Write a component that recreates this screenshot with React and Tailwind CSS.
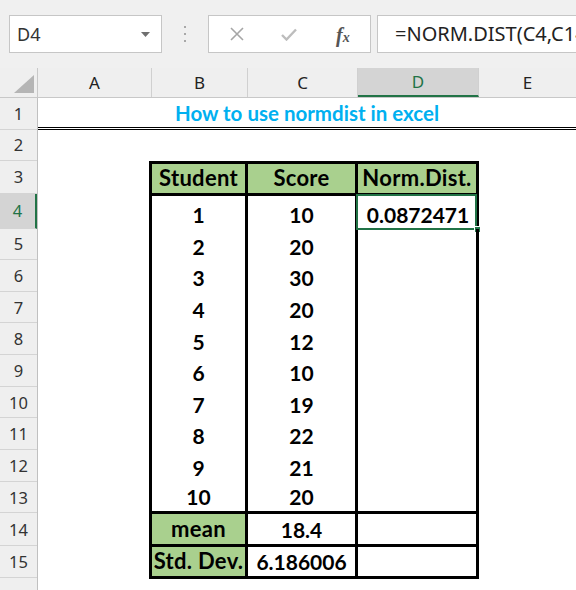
const COLS = [
  { l: "A", cls: "w-[114px]" },
  { l: "B", cls: "w-[96px]" },
  { l: "C", cls: "w-[110px]" },
  { l: "D", cls: "w-[121px] bg-[#d4d4d4] text-[#217346] border-b-2 border-b-[#217346]" },
];

const ROW_HEADS = [
  { n: 1, cls: "h-[31.5px]" },
  { n: 2, cls: "h-[31.5px]" },
  { n: 3, cls: "h-[32.5px]" },
  { n: 4, cls: "h-[35px] bg-[#d4d4d4] text-[#217346] border-r-2 border-r-[#217346]" },
  { n: 5, cls: "h-[31.65px]" },
  { n: 6, cls: "h-[31.65px]" },
  { n: 7, cls: "h-[31.65px]" },
  { n: 8, cls: "h-[31.65px]" },
  { n: 9, cls: "h-[31.65px]" },
  { n: 10, cls: "h-[31.65px]" },
  { n: 11, cls: "h-[31.65px]" },
  { n: 12, cls: "h-[31.65px]" },
  { n: 13, cls: "h-[31.65px]" },
  { n: 14, cls: "h-[32.5px]" },
  { n: 15, cls: "h-[32.5px]" },
];

const STUDENTS = [
  { h: "h-[33px]", s: "1", v: "10" },
  { h: "h-[31.65px]", s: "2", v: "20" },
  { h: "h-[31.65px]", s: "3", v: "30" },
  { h: "h-[31.65px]", s: "4", v: "20" },
  { h: "h-[31.65px]", s: "5", v: "12" },
  { h: "h-[31.65px]", s: "6", v: "10" },
  { h: "h-[31.65px]", s: "7", v: "19" },
  { h: "h-[31.65px]", s: "8", v: "22" },
  { h: "h-[31.65px]", s: "9", v: "21" },
  { h: "h-[31.65px] border-b-[3px] pb-[3px]", s: "10", v: "20" },
];

const cell = "flex items-end justify-center pb-[4px] border-r-[3px] border-black leading-none";
// labels in the table are a touch wider than the digits
const label = "text-[22px] tracking-[0.3px]";

function Toolbar() {
  return (
    <div className="flex h-[68px] items-start bg-[#f0f0f0] pl-[9px] pt-[15px] font-['Noto_Sans']">
      <div className="flex h-[38px] w-[153px] items-center justify-between border border-[#c6c6c6] bg-white pl-[7px] pr-[11px]">
        <span className="text-[18px] text-[#333]">D4</span>
        <svg width="9" height="5" viewBox="0 0 9 5">
          <path d="M0 0h9L4.5 5z" fill="#6f6f6f" />
        </svg>
      </div>
      <div className="flex h-[38px] w-[46px] flex-col items-center justify-center gap-[5px]">
        <span className="h-[2px] w-[2px] bg-[#a8a8a8]" />
        <span className="h-[2px] w-[2px] bg-[#a8a8a8]" />
        <span className="h-[2px] w-[2px] bg-[#a8a8a8]" />
      </div>
      <div className="relative h-[38px] w-[163px] border border-[#c6c6c6] bg-white">
        <svg className="absolute left-[21px] top-[11px]" width="14" height="14" viewBox="0 0 14 14">
          <path d="M1 1l12 12M13 1L1 13" stroke="#a6a6a6" strokeWidth="1.6" />
        </svg>
        <svg className="absolute left-[72px] top-[12px]" width="16" height="13" viewBox="0 0 16 13">
          <path d="M1 7l4.5 4.5L15 1.5" stroke="#bdbdbd" strokeWidth="2.4" fill="none" />
        </svg>
        <span className="absolute left-[127px] top-[4px] font-['Liberation_Serif'] font-bold italic text-[#555]">
          <span className="text-[20px]">f</span>
          <span className="text-[14px]">x</span>
        </span>
      </div>
      <div className="ml-[6px] flex h-[38px] flex-1 items-center overflow-hidden whitespace-nowrap border border-r-0 border-[#c6c6c6] bg-white pl-[17px]">
        <span className="text-[20px] text-[#222]">=NORM.DIST(C4,C14,C15,FALSE)</span>
      </div>
    </div>
  );
}

function ColumnHeader() {
  return (
    <div className="flex h-[30px] border-b border-[#c8c8c8] bg-[#efefef] font-['Noto_Sans'] text-[17px] text-[#222]">
      <div className="flex w-[38px] items-end justify-end border-r border-[#c8c8c8] pb-[4px] pr-[3px]">
        <svg width="20" height="18" viewBox="0 0 20 18">
          <path d="M20 0V18H0z" fill="#b5b5b5" />
        </svg>
      </div>
      {COLS.map((c) => (
        <div key={c.l} className={`flex items-center justify-center border-r border-[#d0d0d0] pt-[1px] ${c.cls}`}>
          {c.l}
        </div>
      ))}
      <div className="flex w-[97px] items-center justify-center pt-[1px]">E</div>
    </div>
  );
}

function RowHeaders() {
  return (
    <div className="flex w-[38px] shrink-0 flex-col border-r border-[#c0c0c0] bg-[#efefef] font-['Noto_Sans'] text-[16.5px] text-[#333]">
      {ROW_HEADS.map((r) => (
        <div key={r.n} className={`flex items-center justify-center border-b border-[#d4d4d4] pt-[2px] ${r.cls}`}>
          {r.n}
        </div>
      ))}
      <div className="flex-1" />
    </div>
  );
}

function DataTable() {
  return (
    <div className="ml-[111px] w-fit border-l-[3px] border-t-[3px] border-black font-['Lato'] text-[21px] font-bold text-black">
      <div className="flex">
        <div className={`${cell} ${label} h-[32px] w-[96px] border-b-[3px] bg-[#a9d08e]`}>Student</div>
        <div className={`${cell} ${label} h-[32px] w-[110px] border-b-[3px] bg-[#a9d08e]`}>Score</div>
        <div className={`${cell} ${label} h-[32px] w-[121px] border-b-[3px] bg-[#a9d08e]`}>Norm.Dist.</div>
      </div>
      {STUDENTS.map((r, i) => (
        <div key={r.s} className="flex">
          <div className={`${cell} w-[96px] ${r.h}`}>{r.s}</div>
          <div className={`${cell} w-[110px] ${r.h}`}>{r.v}</div>
          <div className={`${cell} relative w-[121px] ${r.h}`}>
            {i === 0 && (
              <>
                <span className="pl-[2px]">0.0872471</span>
                <div className="pointer-events-none absolute -left-[2px] -top-[2px] -right-[1px] -bottom-[1px] border-2 border-[#217346]" />
                <div className="absolute -bottom-[4px] -right-[5px] h-[7px] w-[7px] border border-white bg-[#217346]" />
              </>
            )}
          </div>
        </div>
      ))}
      <div className="flex">
        <div className={`${cell} ${label} h-[33px] w-[96px] border-b-[3px] bg-[#a9d08e] pb-[2px]`}>mean</div>
        <div className={`${cell} h-[33px] w-[110px] border-b-[3px] pb-[2px]`}>18.4</div>
        <div className={`${cell} h-[33px] w-[121px] border-b-[3px]`} />
      </div>
      <div className="flex">
        <div className={`${cell} ${label} h-[32.5px] w-[96px] border-b-[3px] bg-[#a9d08e] pb-[2px]`}>Std. Dev.</div>
        <div className={`${cell} h-[32.5px] w-[110px] border-b-[3px] pb-[2px]`}>6.186006</div>
        <div className={`${cell} h-[32.5px] w-[121px] border-b-[3px]`} />
      </div>
    </div>
  );
}

export default function App() {
  return (
    <div className="flex h-[590px] w-[576px] flex-col overflow-hidden bg-white">
      <Toolbar />
      <ColumnHeader />
      <div className="flex flex-1">
        <RowHeaders />
        <div className="flex flex-1 flex-col">
          <div className="flex h-[31.5px] items-center justify-center border-b-[3px] border-double border-black pt-[3px] font-['Lato'] text-[20.5px] font-bold text-[#00b0f0]">
            How to use normdist in excel
          </div>
          <div className="h-[31.5px]" />
          <DataTable />
        </div>
      </div>
    </div>
  );
}
